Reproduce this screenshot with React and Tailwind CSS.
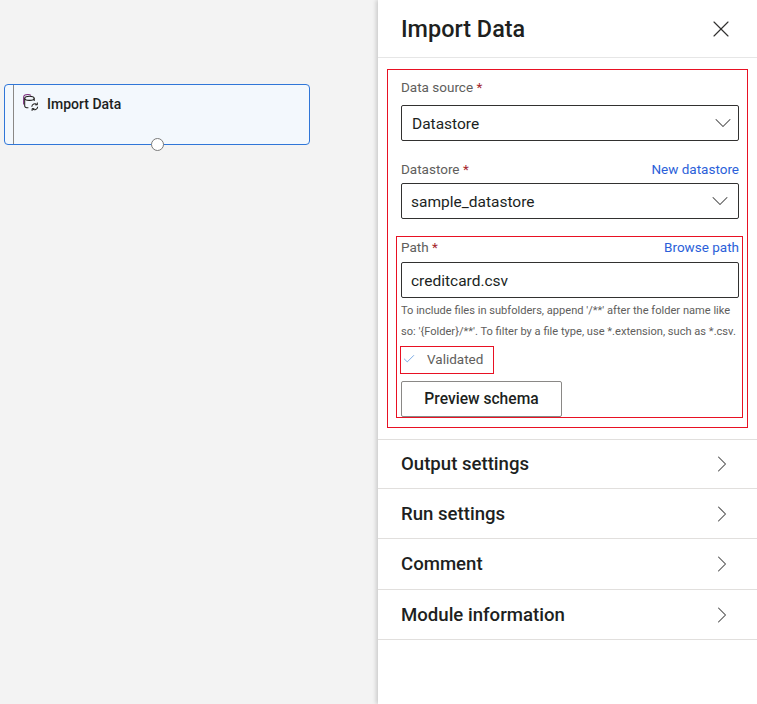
import { ChevronDown, ChevronRight, X, Check } from "lucide-react";

const SECTIONS = [
  { label: "Output settings", height: "h-[49px]" },
  { label: "Run settings", height: "h-[50px]" },
  { label: "Comment", height: "h-[51px]" },
  { label: "Module information", height: "h-[50px]" },
];

function Label({ text, link }) {
  return (
    <div className="flex items-end justify-between">
      <span className="text-[13.5px] leading-[18px] text-[#605e5c]">
        {text} <span className="text-[#a4262c]">*</span>
      </span>
      {link && <span className="text-[13.5px] leading-[18px] text-[#2b5fd9]">{link}</span>}
    </div>
  );
}

function Field({ value, chevronClass, textClass }) {
  return (
    <div className="flex h-[36px] items-center justify-between rounded-[2px] border border-[#323130] bg-white pl-[9px] text-[15.5px] text-[#201f1e]">
      <span className={`pt-[4px] ${textClass || ""}`}>{value}</span>
      {chevronClass && <ChevronDown size={28} strokeWidth={0.9} className={`text-[#4a4a4a] ${chevronClass}`} />}
    </div>
  );
}

function DatabaseIcon() {
  return (
    <svg width="19" height="19" viewBox="0 0 18 18" fill="none" stroke="#201f1e" strokeWidth="1">
      <path d="M2.5 11V4c0-1.5 2-2.5 4-2.5 1.2 0 2.3.3 3 .8" stroke="#7a2a7a" />
      <ellipse cx="8" cy="5" rx="4.5" ry="2" fill="#f3f8fd" />
      <path d="M3.5 5v7c0 1.1 1.6 2 3.5 2" />
      <path d="M12.5 5v2.5" />
      <path d="M10.2 13a3 3 0 0 1 5-2M15.8 13a3 3 0 0 1-5 2" />
      <path d="M15.5 9v2.2h-2.2M10.5 17v-2.2h2.2" strokeWidth="0.9" />
    </svg>
  );
}

export default function App() {
  return (
    <div className="flex h-[704px] w-[757px] overflow-hidden bg-[#f3f3f3] font-['Roboto','Noto_Sans',sans-serif]">
      {/* canvas */}
      <div className="w-[378px] shrink-0 pl-[4px] pt-[84px]">
        <div className="relative flex h-[61px] w-[306px] rounded-[4px] border border-[#2f76d8] bg-[#f3f8fd]">
          <div className="w-[9px] border-r border-[#8a8886]" />
          <div className="flex items-start gap-[7px] pl-[7px] pt-[8px]">
            <DatabaseIcon />
            <span className="pt-[1px] text-[14px] font-medium leading-[20px] text-[#201f1e]">Import Data</span>
          </div>
          <div className="absolute bottom-[-7px] left-[146px] h-[13px] w-[13px] rounded-full border border-[#7a7a7a] bg-white" />
        </div>
      </div>

      {/* side panel */}
      <div className="flex w-[379px] flex-col bg-white shadow-[-2px_0_4px_rgba(0,0,0,0.16)]">
        <div className="flex h-[58px] items-center justify-between border-b border-[#e6e6e6] pl-[23px] pr-[22px]">
          <h1 className="text-[23.4px] font-medium leading-[28px] text-[#201f1e]">Import Data</h1>
          <X size={28} strokeWidth={1} className="text-[#323130]" />
        </div>

        <div className="pl-[9px] pt-[11px] pr-[9px]">
          <div className="pb-[9px] pl-[14px] pr-[9px] pt-[9px] shadow-[inset_0_0_0_1px_#e81123]">
            <Label text="Data source" />
            <div className="mt-[9px]">
              <Field value="Datastore" textClass="pl-[1px]" chevronClass="mr-[1px]" />
            </div>
            <div className="mt-[19px]">
              <Label text="Datastore" link="New datastore" />
            </div>
            <div className="mt-[5px]">
              <Field value="sample_datastore" chevronClass="mr-[4px]" />
            </div>

            <div className="-ml-[5px] -mr-[4px] mb-[1px] mt-[17px] border border-[#e81123] pl-[4px] pr-[3px] pt-[1px]">
              <Label text="Path" link="Browse path" />
              <div className="mt-[6px]">
                <Field value="creditcard.csv" />
              </div>
              <p className="mt-[2px] whitespace-nowrap text-[11.1px] leading-[21px] text-[#605e5c]">
                To include files in subfolders, append '/**' after the folder name like
                <br />
                so: '{"{Folder}"}/**'. To filter by a file type, use *.extension, such as *.csv.
              </p>
              <div className="-ml-[1px] mt-[4px] flex h-[28px] w-[94px] items-center border border-[#e81123] pb-[2px] pl-[1px]">
                <Check size={14} strokeWidth={1} className="text-[#1f6fd0]" />
                <span className="ml-[11px] text-[13.5px] text-[#605e5c]">Validated</span>
              </div>
              <button className="mt-[7px] block h-[36px] w-[161px] rounded-[2px] border border-[#8a8886] bg-white pt-[2px] text-[15.6px] font-medium text-[#201f1e]">
                Preview schema
              </button>
            </div>
          </div>
        </div>

        <div className="mt-[11px] border-t border-[#e1dfdd]">
          {SECTIONS.map((s) => (
            <div
              key={s.label}
              className={`flex ${s.height} items-center justify-between border-b border-[#e1dfdd] pl-[23px] pr-[21px]`}
            >
              <span className="pt-[2px] text-[18.6px] font-medium text-[#201f1e]">{s.label}</span>
              <ChevronRight size={28} strokeWidth={0.9} className="text-[#4a4a4a]" />
            </div>
          ))}
        </div>
      </div>
    </div>
  );
}
